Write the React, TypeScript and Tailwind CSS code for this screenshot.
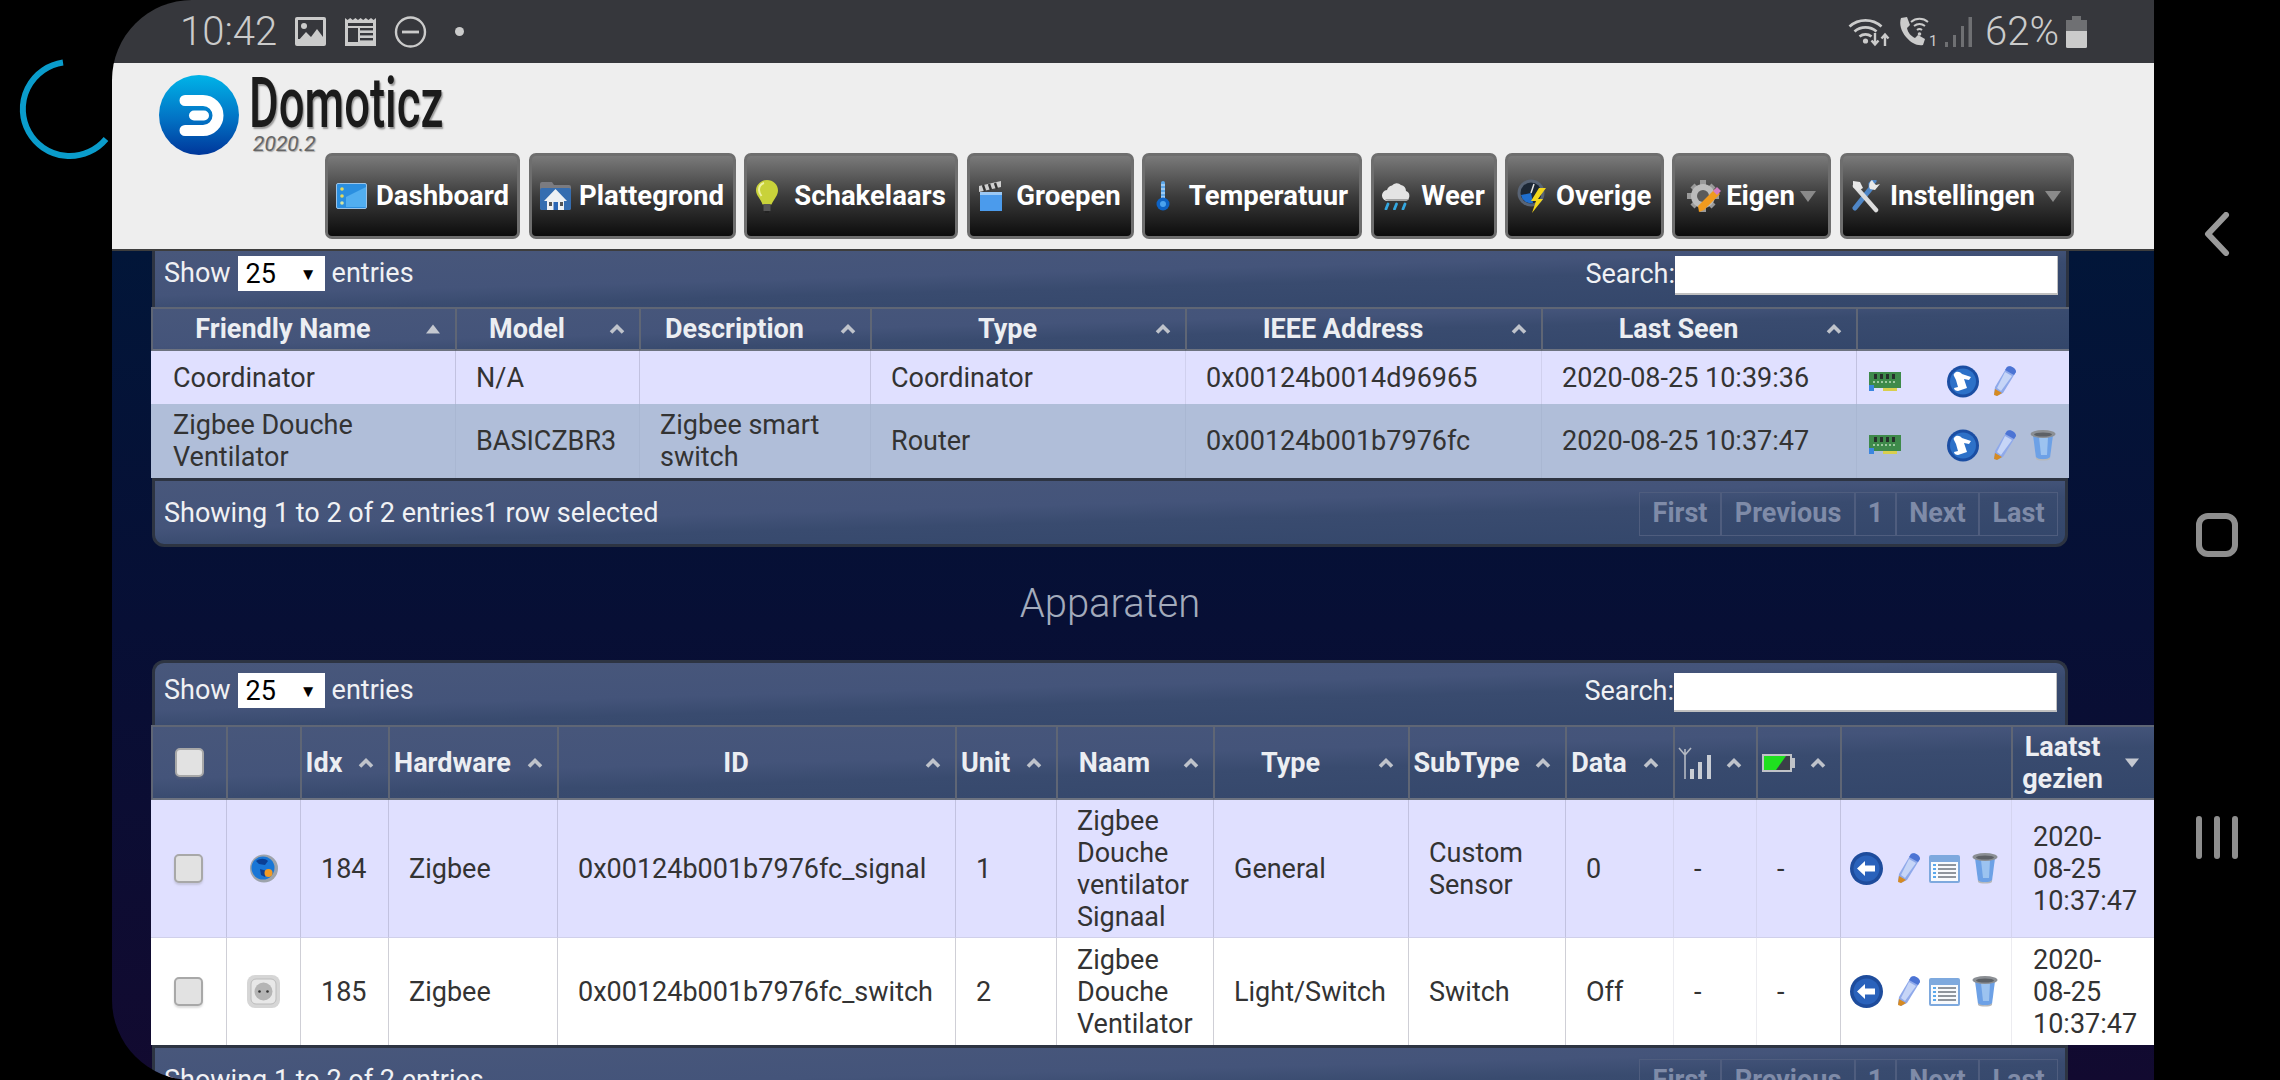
import type { ReactNode } from 'react';

const panelBg =
  'bg-[linear-gradient(178.5deg,#48577b_0%,#44547a_42%,#394b6f_58%,#33466a_100%)]';

function Chevron({ down }: { down?: boolean }) {
  return (
    <svg width="16" height="11" viewBox="0 0 16 11">
      {down ? (
        <path d="M1 1h14l-7 9z" fill="#c4c8d0" />
      ) : (
        <path d="M2 9l6-6 6 6" fill="none" stroke="#bfc3cb" strokeWidth="3.6" />
      )}
    </svg>
  );
}

function Solid() {
  return (
    <svg width="16" height="11" viewBox="0 0 16 11">
      <path d="M1 10h14L8 1z" fill="#c4c8d0" />
    </svg>
  );
}

/* ---- status bar ---- */
function ImageIcon() {
  return (
    <svg width="31" height="29" viewBox="0 0 31 29">
      <rect width="31" height="29" rx="2" fill="#cbcbcb" />
      <rect x="3" y="3" width="25" height="19" fill="#36373c" />
      <circle cx="9" cy="9" r="3" fill="#cbcbcb" />
      <path d="M3 24l8-9 5 5 6-8 6 8v6H3z" fill="#cbcbcb" />
    </svg>
  );
}

function NewsIcon() {
  return (
    <svg width="31" height="29" viewBox="0 0 31 29">
      <path d="M0 1l2.6 2L5.2 1l2.6 2 2.6-2L13 3l2.6-2 2.6 2 2.6-2 2.6 2L26 1l2.6 2L31 1v28H0z" fill="#cbcbcb" />
      <rect x="3" y="6" width="25" height="3" fill="#36373c" />
      <rect x="3" y="11" width="10" height="14" fill="#36373c" />
      <rect x="15" y="11" width="13" height="2.4" fill="#36373c" />
      <rect x="15" y="16" width="13" height="2.4" fill="#36373c" />
      <rect x="15" y="21" width="13" height="2.4" fill="#36373c" />
    </svg>
  );
}

function DndIcon() {
  return (
    <svg width="33" height="32" viewBox="0 0 33 32">
      <circle cx="16.5" cy="16" r="14.5" fill="none" stroke="#cbcbcb" strokeWidth="2.4" />
      <rect x="8" y="14.6" width="17" height="2.8" fill="#cbcbcb" />
    </svg>
  );
}

function WifiIcon() {
  return (
    <svg width="43" height="32" viewBox="0 0 43 32" fill="none" stroke="#cbcbcb" strokeWidth="2.8">
      <path d="M1.5 10.5a24 24 0 0 1 32 0" />
      <path d="M6.5 15.5a17 17 0 0 1 22 0" />
      <path d="M11.5 20.5a10 10 0 0 1 12 0" />
      <circle cx="17.5" cy="25" r="2.6" fill="#cbcbcb" stroke="none" />
      <path d="M27 17v11M23.5 24.5l3.5 4 3.500-4M37 30V19M33.500 22.500l3.500-4 3.500 4" strokeWidth="2.400" />
    </svg>
  );
}

function CallIcon() {
  return (
    <svg width="37" height="31" viewBox="0 0 37 31">
      <path d="M2 2l6-1 3 8-3 3c1 5 4 8 8 10l3-3 7 4-2 6c-6 1-12-2-17-8S0 8 2 2z" fill="#cbcbcb" />
      <g fill="none" stroke="#cbcbcb" strokeWidth="2">
        <path d="M12 6a13 13 0 0 1 17 0" />
        <path d="M15 10a9 9 0 0 1 11 0" />
        <path d="M18 14a4 4 0 0 1 5 0" />
      </g>
      <circle cx="20.500" cy="18" r="1.800" fill="#cbcbcb" />
      <text x="30" y="30" fontSize="15" fill="#cbcbcb" fontFamily="Roboto, sans-serif">1</text>
    </svg>
  );
}

function SignalIcon() {
  return (
    <svg width="27" height="30" viewBox="0 0 27 30" fill="#6f7073">
      <rect x="0" y="25" width="3" height="5" />
      <rect x="8" y="18" width="3" height="12" />
      <rect x="16" y="9" width="3" height="21" />
      <rect x="23.500" y="0" width="3.500" height="30" />
    </svg>
  );
}

function BatteryIcon() {
  return (
    <svg width="21" height="32" viewBox="0 0 21 32">
      <path d="M6 0h9v4h6v14H0V4h6z" fill="#6f7073" />
      <path d="M0 15h21v15.500a1.500 1.500 0 0 1-1.500 1.500h-18A1.500 1.500 0 0 1 0 30.500z" fill="#cbcbcb" />
    </svg>
  );
}

/* ---- logo ---- */
function Logo() {
  return (
    <svg width="80" height="80" viewBox="0 0 80 80" className="shrink-0">
      <defs>
        <linearGradient id="logoG" x1="0" y1="0" x2="0" y2="1">
          <stop offset="0" stopColor="#00b4e8" />
          <stop offset="0.55" stopColor="#0272c4" />
          <stop offset="1" stopColor="#00369a" />
        </linearGradient>
      </defs>
      <circle cx="40" cy="40" r="40" fill="url(#logoG)" />
      <path d="M26 25.500h18a15 15 0 0 1 0 30H26" fill="none" stroke="#fff" strokeWidth="11" strokeLinecap="round" />
      <path d="M35 40.500h10" stroke="#fff" strokeWidth="10" strokeLinecap="round" />
    </svg>
  );
}

/* ---- nav icons ---- */
function DashIcon() {
  return (
    <svg width="31" height="26" viewBox="0 0 31 26">
      <rect x="0.500" y="0.500" width="30" height="25" rx="1.500" fill="#2b8fe0" stroke="#9cc3e6" />
      <path d="M10 14l20-10v20H10z" fill="#51aef0" />
      <circle cx="6" cy="6" r="1.800" fill="#e6d95a" />
      <circle cx="6" cy="13" r="1.800" fill="#e6d95a" />
      <circle cx="6" cy="20" r="1.800" fill="#d5e6a0" />
    </svg>
  );
}

function HouseIcon() {
  return (
    <svg width="31" height="28" viewBox="0 0 31 28">
      <path d="M2 0h10l2 3h15a2 2 0 0 1 2 2v21a2 2 0 0 1-2 2H2a2 2 0 0 1-2-2V2a2 2 0 0 1 2-2z" fill="#7b7b80" />
      <rect y="6" width="31" height="22" rx="2" fill="#356db0" />
      <path d="M15.500 7L27 19h-3v9H7v-9H4z" fill="#eef1f4" />
      <rect x="13.500" y="20" width="4.500" height="8" fill="#2a66b5" />
      <rect x="9" y="20" width="3" height="4" fill="#555" />
      <rect x="20" y="20" width="3" height="4" fill="#555" />
    </svg>
  );
}

function BulbIcon() {
  return (
    <svg width="22" height="33" viewBox="0 0 22 33">
      <path d="M11 0c6 0 11 4.500 11 10.500 0 5-4 8.500-6.500 14h-9C5 19 0 15.500 0 10.500 0 4.500 5 0 11 0z" fill="#c9d23a" />
      <path d="M8 3C5 4 3 7 3 10c0 2 1 4 2.500 6" fill="none" stroke="#eef2a0" strokeWidth="2" />
      <rect x="7.500" y="24" width="7" height="7" fill="#555" />
      <rect x="9" y="31" width="4" height="2" fill="#222" />
    </svg>
  );
}

function ClapIcon() {
  return (
    <svg width="24" height="30" viewBox="0 0 24 30">
      <path d="M0 5l22-5v6L0 11z" fill="#cfcfcf" />
      <path d="M4 4l2 6M10 3l2 6M16 2l2 6" stroke="#333" strokeWidth="2.400" />
      <rect x="1" y="11" width="22" height="19" fill="#4b9bec" />
      <rect x="1" y="11" width="22" height="3" fill="#9cc9f5" />
    </svg>
  );
}

function ThermoIcon() {
  return (
    <svg width="14" height="30" viewBox="0 0 14 30">
      <rect x="5" y="0" width="4" height="21" rx="2" fill="#5ea8ea" />
      <path d="M5 4h4M5 8h4M5 12h4M5 16h4" stroke="#d8ecff" strokeWidth="1.200" />
      <circle cx="7" cy="23" r="6.500" fill="#0d62c4" />
      <circle cx="7" cy="23" r="3" fill="#4aa2ee" />
    </svg>
  );
}

function CloudIcon() {
  return (
    <svg width="29" height="27" viewBox="0 0 29 27">
      <path d="M6 18a5.500 5.500 0 0 1-1-11 7 7 0 0 1 5-4.500A6 6 0 0 1 19 2a6.500 6.500 0 0 1 5 6 5.200 5.200 0 0 1-1 10z" fill="#e4e4e4" />
      <path d="M6 18a5 5 0 0 1-3-2h24a5 5 0 0 1-4 2z" fill="#a5a5a5" />
      <path d="M6 21l-2 5M14.500 21l-2 5M23 21l-2 5" stroke="#34a7e0" strokeWidth="2.800" strokeLinecap="round" />
    </svg>
  );
}

function GaugeIcon() {
  return (
    <svg width="30" height="34" viewBox="0 0 30 34">
      <circle cx="14" cy="14" r="13.500" fill="#596475" />
      <circle cx="14" cy="14" r="10.500" fill="#1c2735" />
      <path d="M4 16a10 10 0 0 0 12 8l-2-10z" fill="#1f6fd0" />
      <path d="M14 14l3-9" stroke="#e4e4e4" strokeWidth="1.500" />
      <path d="M22 9h7l-8 11h5L15 34l4-12h-5z" fill="#f3d71c" />
    </svg>
  );
}

function GearIcon() {
  return (
    <svg width="34" height="33" viewBox="0 0 34 33">
      <g fill="#9a9a9a">
        <path d="M13 0h6v6h-6zM13 26h6v6h-6zM0 13h6v6H0zM26 13h6v6h-6z" />
        <path d="M3.500 7.500l4-4 4 4-4 4zM20.500 7.500l4-4 4 4-4 4zM3.500 24.500l4-4 4 4-4 4zM20.500 24.500l4-4 4 4-4 4z" />
      </g>
      <circle cx="16" cy="16" r="12" fill="#bcbcbc" />
      <circle cx="16" cy="16" r="6" fill="#5a5a5a" />
      <path d="M12 32l-1-6 17-17 5 5-16 16z" fill="#f09a1e" />
      <path d="M26 11l4-4 4 4-4 4z" fill="#d47ec2" />
    </svg>
  );
}

function ToolsIcon() {
  return (
    <svg width="28" height="33" viewBox="0 0 28 33">
      <path d="M22 1l-3 3v4l-16 20" fill="none" stroke="#4f86c6" strokeWidth="5" strokeLinecap="round" />
      <path d="M3 6l21 24" stroke="#dcdcdc" strokeWidth="4.500" strokeLinecap="round" />
      <path d="M1 1l7 1 3 6-5 3-5-4z" fill="#e8e8e8" />
      <path d="M20 0a7 7 0 0 0-2 9l5 1 5-6-4 1-2-2z" fill="#e8e8e8" />
    </svg>
  );
}

function Caret() {
  return (
    <svg width="16" height="11" viewBox="0 0 16 11" className="shrink-0">
      <path d="M0 0h16l-8 11z" fill="#8a8a8a" />
    </svg>
  );
}

/* ---- row icons ---- */
function PencilIcon() {
  return (
    <svg width="24" height="33" viewBox="0 0 24 33">
      <path d="M14 2c3-2 9 1 9 5L10 28l-6 3-3-2 1-7z" fill="#8fa9ea" />
      <path d="M14 2c3-2 9 1 9 5l-2 3-9-5z" fill="#4c74d4" />
      <path d="M12 7l7 4L8 26l-4-3z" fill="#c6d5f7" />
      <path d="M2 24l7 4-5 3-3-1z" fill="#d68a22" />
    </svg>
  );
}

function TrashIcon() {
  return (
    <svg width="26" height="33" viewBox="0 0 26 33">
      <path d="M3 6h20l-3 23c-2 2-12 2-14 0z" fill="#6da1e6" />
      <path d="M9 8h9l-1 18H11z" fill="#9cc3f0" />
      <ellipse cx="13" cy="5" rx="12.500" ry="4" fill="#8b8f94" />
      <ellipse cx="13" cy="5.500" rx="9" ry="2" fill="#5d6166" />
      <path d="M6 28c2 3 12 3 14 0v2c-2 2-12 2-14 0z" fill="#b6b8ba" />
    </svg>
  );
}

function ListIcon() {
  return (
    <svg width="31" height="28" viewBox="0 0 31 28">
      <rect width="31" height="28" rx="2" fill="#7ea9de" />
      <rect x="2" y="7" width="27" height="19" fill="#f8fafd" />
      <path d="M9 10h18M9 14h18M9 18h18M9 22h18" stroke="#8f959d" strokeWidth="1.800" />
      <path d="M4 10h3M4 14h3M4 18h3M4 22h3" stroke="#5aa8ec" strokeWidth="2" />
    </svg>
  );
}

function BackIcon() {
  return (
    <svg width="33" height="33" viewBox="0 0 33 33">
      <circle cx="16.500" cy="16.500" r="16.500" fill="#1e4c9c" />
      <circle cx="16.500" cy="16.500" r="13" fill="#2a62bb" />
      <path d="M7 16.500L15 9v4.500h10v6H15V24z" fill="#fff" />
    </svg>
  );
}

function ScriptIcon() {
  return (
    <svg width="32" height="33" viewBox="0 0 32 33">
      <circle cx="16" cy="16.500" r="16" fill="#1b4ea3" />
      <circle cx="16" cy="16.500" r="13" fill="#2d71c8" />
      <path d="M9 7c3-1 5 1 6 2l9 3-2 3-5-1 3 9-9 3c-2 0-4-1-4-3l4-1-2-7-2-4c-1-1 0-3 2-4z" fill="#fff" />
    </svg>
  );
}

function CardIcon() {
  return (
    <svg width="32" height="22" viewBox="0 0 32 22">
      <rect x="0" y="1" width="32" height="16" fill="#3e8a4a" />
      <rect x="0" y="14" width="5" height="6" fill="#3a86e0" />
      <rect x="14" y="17" width="14" height="3" fill="#d9cf4d" />
      <path d="M5 3h3v5H5zM11 3h3v5h-3zM17 3h3v5h-3zM23 3h3v5h-3z" fill="#26302a" />
      <path d="M4 11h24" stroke="#9ec9a0" strokeWidth="2" strokeDasharray="2 2" />
    </svg>
  );
}

function GlobeIcon() {
  return (
    <svg width="28" height="31" viewBox="0 0 28 31">
      <circle cx="14" cy="15.500" r="14" fill="#9da3ab" />
      <circle cx="13" cy="15" r="11.500" fill="#1976d6" />
      <path d="M6 8c4-3 9-3 12 0l-3 4-6-1zM10 16l7 2-2 6-4-2z" fill="#0b3f94" />
      <circle cx="18.500" cy="20" r="4" fill="#f29a23" />
    </svg>
  );
}

function SocketIcon() {
  return (
    <svg width="33" height="33" viewBox="0 0 33 33">
      <rect width="33" height="33" rx="8" fill="#d6d6d6" />
      <rect x="4" y="4" width="25" height="25" rx="5" fill="#e8e8e8" stroke="#bcbcbc" />
      <circle cx="16.500" cy="16.500" r="9" fill="#b5b5b5" />
      <circle cx="12.500" cy="16.500" r="1.300" fill="#333" />
      <circle cx="20.500" cy="16.500" r="1.300" fill="#333" />
    </svg>
  );
}

function AntennaIcon() {
  return (
    <svg width="34" height="32" viewBox="0 0 34 32" fill="none" stroke="#b4b9c2">
      <path d="M7 2v30M1 1l6 7 6-7" strokeWidth="1.600" />
      <g fill="#c9cdd4" stroke="none">
        <rect x="12" y="22" width="4" height="10" />
        <rect x="20" y="15" width="4" height="17" />
        <rect x="29" y="8" width="4" height="24" />
      </g>
    </svg>
  );
}

function BatteryHead() {
  return (
    <svg width="33" height="18" viewBox="0 0 33 18">
      <rect x="1" y="1" width="28" height="16" fill="#3a3f48" stroke="#c0c3c8" strokeWidth="2" />
      <path d="M2 2h22L14 16H2z" fill="#1fe01f" />
      <rect x="29" y="4" width="4" height="10" fill="#c0c3c8" />
    </svg>
  );
}

function Check() {
  return (
    <span className="block h-[29px] w-[29px] rounded-[5px] border-2 border-[#a8a8a8] bg-[#e2e2e2] shadow-[0_2px_2px_rgba(120,120,120,0.25)]" />
  );
}

/* ---- table parts ---- */
function Th({
  children,
  w,
  sort = 'up',
}: {
  children?: ReactNode;
  w: string;
  sort?: 'up' | 'down' | 'solid' | 'none';
}) {
  return (
    <th
      className={`relative border-t-2 border-b-2 border-l-2 border-t-[#5f6675] border-b-[#6d7380] border-l-[#5f6675] p-0 text-[27px] leading-[32px] font-bold text-[#eceef2] ${w}`}
    >
      <div className={`flex items-center justify-center ${sort === 'none' ? '' : 'pr-[42px]'}`}>
        {children}
      </div>
      {sort !== 'none' && (
        <span className="absolute top-1/2 right-[14px] flex -translate-y-1/2">
          {sort === 'solid' ? <Solid /> : <Chevron down={sort === 'down'} />}
        </span>
      )}
    </th>
  );
}

function Td({ children, line }: { children?: ReactNode; line: string }) {
  return <td className={`border-l px-[20px] py-0 align-middle ${line}`}>{children}</td>;
}

function Toolbar({ tall }: { tall?: boolean }) {
  return (
    <div className={`flex items-start justify-between pr-[8px] pl-[9px] text-[27px] leading-[32px] text-[#f0f1f4] ${tall ? 'h-[62px] pt-[10px]' : 'h-[56px] pt-[5px]'}`}>
      <div className="flex items-center gap-[7px]">
        <span className="-mt-[1px]">Show</span>
        <div className="flex h-[35px] w-[87px] items-center justify-between bg-white pr-[8px] pl-[8px] text-black">
          <span>25</span>
          <span className="text-[17px]">▼</span>
        </div>
        <span className="-mt-[1px]">entries</span>
      </div>
      <div className="flex items-center">
        <span className="-mt-[3px]">Search:</span>
        <div className="h-[39px] w-[383px] border-r border-b-2 border-[#c0c0c0] bg-white" />
      </div>
    </div>
  );
}

function Pager() {
  return (
    <div className="flex h-[44px] border border-[#4f5d7e] text-[27px] leading-[40px] font-bold text-[#7f8ba8]">
      <span className="w-[80px] text-center">First</span>
      <span className="w-[134px] border-l-2 border-[#4f5d7e] text-center">Previous</span>
      <span className="w-[41px] border-l-2 border-[#4f5d7e] text-center">1</span>
      <span className="w-[83px] border-l-2 border-[#4f5d7e] text-center">Next</span>
      <span className="w-[79px] border-l-2 border-[#4f5d7e] text-center">Last</span>
    </div>
  );
}

function Footer({ text }: { text: string }) {
  return (
    <div className={`flex h-[69px] w-[1916px] items-start justify-between rounded-b-[12px] border-x-[3px] border-t-[3px] border-b-[3px] border-[#2d3442] pt-[11px] pr-[7px] pl-[9px] ${panelBg}`}>
      <span className="mt-[5px] text-[27px] leading-[32px] text-[#f0f1f4]">{text}</span>
      <Pager />
    </div>
  );
}

export default function App() {
  return (
    <div className="flex h-[1080px] w-[2280px] overflow-hidden bg-black font-[Roboto,sans-serif]">
      {/* loading ring, runs under the screen edge */}
      <div className="relative w-[112px] shrink-0">
        <svg width="130" height="170" viewBox="0 0 130 170" className="block">
          <path d="M63 62.500A47 47 0 1 0 106 139" fill="none" stroke="#0a9ccb" strokeWidth="6" />
        </svg>
      </div>

      <div className="relative z-10 flex w-[2042px] shrink-0 flex-col overflow-hidden rounded-l-[80px]">
        <div className="flex h-[63px] shrink-0 items-center justify-between bg-[#36373c] pr-[67px] pl-[68px] text-[#cbcbcb]">
          <div className="flex items-center">
            <span className="text-[40px] leading-[44px] font-light">10:42</span>
            <span className="ml-[18px]"><ImageIcon /></span>
            <span className="ml-[19px]"><NewsIcon /></span>
            <span className="ml-[18px]"><DndIcon /></span>
            <span className="ml-[28px] h-[9px] w-[9px] rounded-full bg-[#cbcbcb]" />
          </div>
          <div className="flex items-center">
            <WifiIcon />
            <span className="ml-[8px]"><CallIcon /></span>
            <span className="ml-[9px]"><SignalIcon /></span>
            <span className="ml-[13px] text-[40px] leading-[44px] font-light">62%</span>
            <span className="ml-[7px]"><BatteryIcon /></span>
          </div>
        </div>

        <div className="h-[188px] shrink-0 border-b-2 border-[#3d3d3d] bg-[#eeeeee]">
          <div className="flex items-start pt-[12px] pl-[47px]">
            <Logo />
            <div className="ml-[10px] flex flex-col items-start">
              <span className="origin-left scale-x-[0.65] text-[70px] leading-[56px] font-medium text-[#1b1b1b] [text-shadow:2px_2px_2px_#999]">
                Domoticz
              </span>
              <span className="mt-[3px] ml-[4px] text-[21px] leading-[20px] text-[#666] italic [text-shadow:1px_1px_1px_#aaa]">2020.2</span>
            </div>
          </div>
          <div className="-mt-[2px] flex gap-[8.5px] pl-[213px]">
            {[
              { label: 'Dashboard', icon: <DashIcon />, w: 'w-[195px] gap-[9px]' },
              { label: 'Plattegrond', icon: <HouseIcon />, w: 'w-[207px] gap-[8px]' },
              { label: 'Schakelaars', icon: <BulbIcon />, w: 'w-[214px] gap-[16px]' },
              { label: 'Groepen', icon: <ClapIcon />, w: 'w-[167px] gap-[13px]' },
              { label: 'Temperatuur', icon: <ThermoIcon />, w: 'w-[220px] gap-[19px]' },
              { label: 'Weer', icon: <CloudIcon />, w: 'w-[126px] gap-[10px]' },
              { label: 'Overige', icon: <GaugeIcon />, w: 'w-[158.5px] gap-[9px]' },
              { label: 'Eigen', icon: <GearIcon />, w: 'w-[159px] gap-[5px]', caret: true },
              { label: 'Instellingen', icon: <ToolsIcon />, w: 'w-[234px] gap-[10px]', caret: true },
            ].map((b) => (
              <div
                key={b.label}
                className={`flex h-[86px] items-center justify-center rounded-[7px] border-[3px] border-[#6e6e6e] bg-[linear-gradient(#7a7a7a,#3c3c3c_50%,#0c0c0c)] text-[27.5px] font-bold text-white ${b.w}`}
              >
                {b.icon}
                <span>{b.label}</span>
                {b.caret && <Caret />}
              </div>
            ))}
          </div>
        </div>

        <div className="min-h-0 flex-1 overflow-hidden bg-[linear-gradient(#021639,#070f35_45%,#120a30)] pl-[40px] text-[#333]">
          {/* Zigbee devices */}
          <div className={`w-[1917px] overflow-hidden ${panelBg} border-x-[3px] border-[#2d3442]`}>
            <Toolbar />
          </div>
          <table className="-ml-[1px] w-[1918px] table-fixed border-separate border-spacing-0 text-[27px] leading-[32px]">
            <thead className={panelBg}>
              <tr className="h-[44px]">
                <Th w="w-[304px]" sort="solid">Friendly Name</Th>
                <Th w="w-[184px]">Model</Th>
                <Th w="w-[231px]">Description</Th>
                <Th w="w-[315px]">Type</Th>
                <Th w="w-[356px]">IEEE Address</Th>
                <Th w="w-[315px]">Last Seen</Th>
                <Th w="w-[213px]" sort="none" />
              </tr>
            </thead>
            <tbody>
              <tr className="h-[53px] bg-[#e0e0ff]">
                <td className="border-l border-l-[#e0e0ff] pl-[21px] align-middle">Coordinator</td>
                <Td line="border-l-[#c2c2e0]">N/A</Td>
                <Td line="border-l-[#c2c2e0]" />
                <Td line="border-l-[#c2c2e0]">Coordinator</Td>
                <Td line="border-l-[#d0d0ee]">0x00124b0014d96965</Td>
                <Td line="border-l-[#d0d0ee]">2020-08-25 10:39:36</Td>
                <td className="border-l border-l-[#c2c2e0] p-0">
                  <div className="flex items-center pt-[8px] pl-[12px]">
                    <CardIcon />
                    <span className="ml-[46px]"><ScriptIcon /></span>
                    <span className="ml-[14px]"><PencilIcon /></span>
                  </div>
                </td>
              </tr>
              <tr className="h-[74px] bg-[#b0bed9]">
                <td className="border-l border-l-[#b0bed9] px-[21px] align-middle">Zigbee Douche Ventilator</td>
                <Td line="border-l-[#a9b7d2]">BASICZBR3</Td>
                <Td line="border-l-[#a9b7d2]">Zigbee smart switch</Td>
                <Td line="border-l-[#a9b7d2]">Router</Td>
                <Td line="border-l-[#a9b7d2]">0x00124b001b7976fc</Td>
                <Td line="border-l-[#a9b7d2]">2020-08-25 10:37:47</Td>
                <td className="border-l border-l-[#a9b7d2] p-0">
                  <div className="flex items-center pt-[8px] pl-[12px]">
                    <CardIcon />
                    <span className="ml-[46px]"><ScriptIcon /></span>
                    <span className="ml-[14px]"><PencilIcon /></span>
                    <span className="ml-[13px]"><TrashIcon /></span>
                  </div>
                </td>
              </tr>
            </tbody>
          </table>
          <Footer text="Showing 1 to 2 of 2 entries1 row selected" />

          <div className="flex h-[113px] w-[1916px] items-center justify-center text-[40px] font-light text-[#a3abbc]">
            Apparaten
          </div>

          {/* Apparaten */}
          <div className={`w-[1916px] rounded-t-[12px] ${panelBg} border-x-[3px] border-t-[3px] border-[#2d3442]`}>
            <Toolbar tall />
          </div>
          <table className="-ml-[1px] w-[2003px] table-fixed border-separate border-spacing-0 text-[27px] leading-[32px]">
            <thead className={panelBg}>
              <tr className="h-[75px]">
                <Th w="w-[75px]" sort="none"><Check /></Th>
                <Th w="w-[74px]" sort="none" />
                <Th w="w-[88px]">Idx</Th>
                <Th w="w-[169px]">Hardware</Th>
                <Th w="w-[398px]">ID</Th>
                <Th w="w-[101px]">Unit</Th>
                <Th w="w-[157px]">Naam</Th>
                <Th w="w-[195px]">Type</Th>
                <Th w="w-[157px]">SubType</Th>
                <Th w="w-[108px]">Data</Th>
                <Th w="w-[83px]"><AntennaIcon /></Th>
                <Th w="w-[84px]"><BatteryHead /></Th>
                <Th w="w-[171px]" sort="none" />
                <Th w="w-[143px]" sort="down">
                  <span className="text-center">Laatst<br />gezien</span>
                </Th>
              </tr>
            </thead>
            <tbody>
              {[
                {
                  bg: 'h-[138px] bg-[#e0e0ff]',
                  line: 'border-l-[#c2c2e0] border-b border-b-[#d0d0ea]',
                  faint: 'border-l-[#d4d4f0] border-b border-b-[#d0d0ea]',
                  icon: <GlobeIcon />,
                  idx: '184',
                  id: '0x00124b001b7976fc_signal',
                  unit: '1',
                  name: 'Zigbee Douche ventilator Signaal',
                  type: 'General',
                  sub: 'Custom Sensor',
                  data: '0',
                },
                {
                  bg: 'h-[107px] bg-white',
                  line: 'border-l-[#cfcfd6]',
                  faint: 'border-l-[#ececf0]',
                  icon: <SocketIcon />,
                  idx: '185',
                  id: '0x00124b001b7976fc_switch',
                  unit: '2',
                  name: 'Zigbee Douche Ventilator',
                  type: 'Light/Switch',
                  sub: 'Switch',
                  data: 'Off',
                },
              ].map((r) => (
                <tr key={r.idx} className={r.bg}>
                  <td className={`p-0 align-middle ${r.faint}`}>
                    <div className="flex justify-center"><Check /></div>
                  </td>
                  <td className={`border-l p-0 align-middle ${r.line}`}>
                    <div className="flex justify-center">{r.icon}</div>
                  </td>
                  <Td line={r.line}>{r.idx}</Td>
                  <Td line={r.line}>Zigbee</Td>
                  <Td line={r.line}>{r.id}</Td>
                  <Td line={r.line}>{r.unit}</Td>
                  <Td line={r.line}>{r.name}</Td>
                  <td className={`border-l pl-[20px] align-middle whitespace-nowrap ${r.line}`}>{r.type}</td>
                  <Td line={r.line}>{r.sub}</Td>
                  <Td line={r.line}>{r.data}</Td>
                  <Td line={r.faint}>-</Td>
                  <Td line={r.faint}>-</Td>
                  <td className={`border-l p-0 align-middle ${r.line}`}>
                    <div className="flex items-center pl-[9px]">
                      <BackIcon />
                      <span className="ml-[14px]"><PencilIcon /></span>
                      <span className="ml-[8px]"><ListIcon /></span>
                      <span className="ml-[12px]"><TrashIcon /></span>
                    </div>
                  </td>
                  <td className={`border-l pl-[21px] align-middle whitespace-nowrap ${r.faint}`}>
                    2020-<br />08-25<br />10:37:47
                  </td>
                </tr>
              ))}
            </tbody>
          </table>
          <Footer text="Showing 1 to 2 of 2 entries" />
        </div>
      </div>

      {/* android nav keys */}
      <div className="relative flex flex-1 flex-col items-center pt-[212px] text-[#8e8e8e]">
        <svg width="26" height="44" viewBox="0 0 26 44" fill="none" stroke="#9a9a9a" strokeWidth="6" strokeLinecap="round" strokeLinejoin="round">
          <path d="M22 3L4 22l18 19" />
        </svg>
        <span className="mt-[257px] block h-[44px] w-[42px] rounded-[12px] border-[6px] border-[#8e8e8e]" />
        <div className="mt-[259px] flex gap-[12px]">
          <span className="h-[43px] w-[6px] rounded-full bg-[#8e8e8e]" />
          <span className="h-[43px] w-[6px] rounded-full bg-[#8e8e8e]" />
          <span className="h-[43px] w-[6px] rounded-full bg-[#8e8e8e]" />
        </div>
      </div>
    </div>
  );
}
